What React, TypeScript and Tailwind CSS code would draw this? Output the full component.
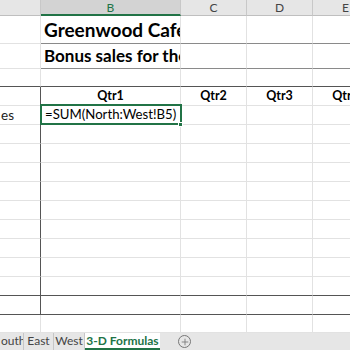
import { Plus } from "lucide-react";

// grid lines / borders
const light = "border-[#e2e2e2]";

const Cell = ({ className = "", children }: { className?: string; children?: React.ReactNode }) => (
    <div className={`border-r border-b box-border overflow-hidden whitespace-nowrap ${className}`}>{children}</div>
);

const App = () => {
    const bodyRows = Array.from({ length: 10 }, (_, i) => i);

    return (
        <div className="w-[350px] h-[350px] overflow-hidden bg-white flex flex-col font-['Lato',sans-serif] text-[#222]">
            {/* column headers */}
            <div className="flex h-[16px] shrink-0 text-[12px] leading-[15px]">
                <div className="w-[41px] shrink-0 bg-[#e6e6e6] border-r border-b border-r-[#c8c8c8] border-b-[#bfbfbf]" />
                <div className="w-[140px] shrink-0 bg-[#d3d3d3] border-r border-r-[#c8c8c8] border-b-2 border-b-[#217346] text-center text-[#217346]">B</div>
                <div className="w-[66px] shrink-0 bg-[#e6e6e6] border-r border-b border-r-[#c8c8c8] border-b-[#bfbfbf] text-center text-[#444]">C</div>
                <div className="w-[66px] shrink-0 bg-[#e6e6e6] border-r border-b border-r-[#c8c8c8] border-b-[#bfbfbf] text-center text-[#444]">D</div>
                <div className="w-[66px] shrink-0 bg-[#e6e6e6] border-r border-b border-r-[#c8c8c8] border-b-[#bfbfbf] text-center text-[#444]">E</div>
            </div>

            <div className="grid grid-cols-[41px_140px_66px_66px_66px] shrink-0">
                {/* row 1 */}
                <Cell className={`h-[28px] ${light}`} />
                <Cell className="h-[28px] border-r-[#e2e2e2] border-b-[#8a8a8a] pl-[3px] pt-[3px] text-[19px] leading-[22px] font-bold text-black">Greenwood Cafe</Cell>
                <Cell className="h-[28px] border-r-[#e2e2e2] border-b-[#8a8a8a]" />
                <Cell className="h-[28px] border-r-[#e2e2e2] border-b-[#8a8a8a]" />
                <Cell className="h-[28px] border-r-[#e2e2e2] border-b-[#8a8a8a]" />

                {/* row 2 */}
                <Cell className={`h-[25px] ${light}`} />
                <Cell className="h-[25px] border-r-[#e2e2e2] border-b-[#8a8a8a] pl-[3px] pt-[2px] text-[17px] leading-[20px] font-bold text-black">Bonus sales for the quarter</Cell>
                <Cell className="h-[25px] border-r-[#e2e2e2] border-b-[#8a8a8a]" />
                <Cell className="h-[25px] border-r-[#e2e2e2] border-b-[#8a8a8a]" />
                <Cell className="h-[25px] border-r-[#e2e2e2] border-b-[#8a8a8a]" />

                {/* row 3 */}
                <Cell className="h-[18px] border-r-[#e2e2e2] border-b-[#555]" />
                <Cell className="h-[18px] border-r-[#e2e2e2] border-b-[#555]" />
                <Cell className="h-[18px] border-r-[#e2e2e2] border-b-[#555]" />
                <Cell className="h-[18px] border-r-[#e2e2e2] border-b-[#555]" />
                <Cell className="h-[18px] border-r-[#e2e2e2] border-b-[#555]" />

                {/* row 4 - quarters */}
                <Cell className="h-[19px] border-r-[#555] border-b-[#e2e2e2]" />
                {["Qtr1", "Qtr2", "Qtr3", "Qtr4"].map((q) => (
                    <Cell key={q} className={`h-[19px] ${light} text-center text-[12.5px] leading-[18px] font-bold text-black`}>{q}</Cell>
                ))}

                {/* row 5 - formula */}
                <Cell className="h-[19px] border-r-[#555] border-b-[#e2e2e2] text-[13.5px] leading-[18px] pl-[1px]">es</Cell>
                <div className="relative h-[19px] border-r border-b border-[#e2e2e2]">
                    <div className="absolute -left-[1px] -top-[2px] w-[142px] h-[21px] border-2 border-[#217346] pl-[3px] text-[13.2px] leading-[16px] whitespace-nowrap text-black">
                        =SUM(North:West!B5)
                    </div>
                    <div className="absolute -right-[3px] -bottom-[3px] w-[5px] h-[5px] bg-[#217346] border border-white" />
                </div>
                <Cell className={`h-[19px] ${light}`} />
                <Cell className={`h-[19px] ${light}`} />
                <Cell className={`h-[19px] ${light}`} />

                {/* rows 6 - 15 */}
                {bodyRows.map((i) => {
                    const bottom = i >= 8 ? "border-b-[#555]" : "border-b-[#e2e2e2]";
                    return [
                        <Cell key={`a${i}`} className={`h-[19px] border-r-[#555] ${bottom}`} />,
                        <Cell key={`b${i}`} className={`h-[19px] border-r-[#e2e2e2] ${bottom}`} />,
                        <Cell key={`c${i}`} className={`h-[19px] border-r-[#e2e2e2] ${bottom}`} />,
                        <Cell key={`d${i}`} className={`h-[19px] border-r-[#e2e2e2] ${bottom}`} />,
                        <Cell key={`e${i}`} className={`h-[19px] border-r-[#e2e2e2] ${bottom}`} />,
                    ];
                })}

                {/* row 16 */}
                <Cell className={`h-[18px] ${light}`} />
                <Cell className={`h-[18px] ${light}`} />
                <Cell className={`h-[18px] ${light}`} />
                <Cell className={`h-[18px] ${light}`} />
                <Cell className={`h-[18px] ${light}`} />
            </div>

            {/* sheet tabs */}
            <div className="flex items-stretch h-[17px] shrink-0 bg-[#e6e6e6] text-[12px] leading-[16px] text-[#444]">
                <div className="w-[24px] border-r border-[#c6c6c6] pl-[1px] overflow-hidden">outh</div>
                <div className="w-[30px] border-r border-[#c6c6c6] text-center">East</div>
                <div className="w-[31px] border-r border-[#c6c6c6] text-center">West</div>
                <div className="w-[75px] bg-white border-b-2 border-[#217346] text-center font-bold text-[#217346]">3-D Formulas</div>
                <div className="ml-[18px] flex items-center">
                    <div className="w-[13px] h-[13px] rounded-full border border-[#777] flex items-center justify-center">
                        <Plus size={10} strokeWidth={2} color="#777" />
                    </div>
                </div>
            </div>
        </div>
    );
};

export default App;
